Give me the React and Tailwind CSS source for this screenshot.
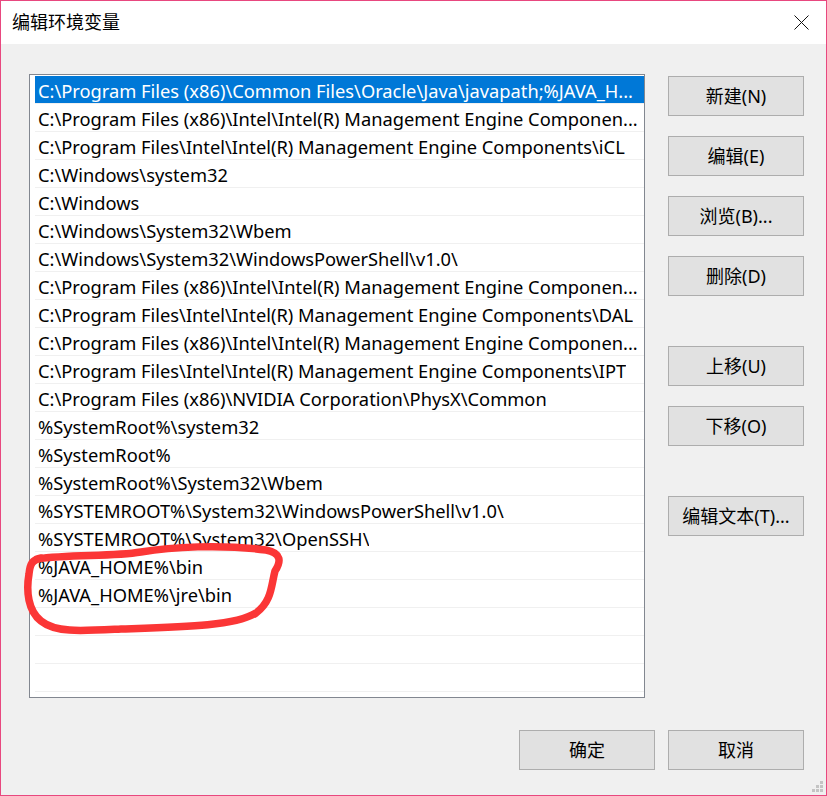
import React from 'react';

const rows = [
  'C:\\Program Files (x86)\\Common Files\\Oracle\\Java\\javapath;%JAVA_H...',
  'C:\\Program Files (x86)\\Intel\\Intel(R) Management Engine Componen...',
  'C:\\Program Files\\Intel\\Intel(R) Management Engine Components\\iCL',
  'C:\\Windows\\system32',
  'C:\\Windows',
  'C:\\Windows\\System32\\Wbem',
  'C:\\Windows\\System32\\WindowsPowerShell\\v1.0\\',
  'C:\\Program Files (x86)\\Intel\\Intel(R) Management Engine Componen...',
  'C:\\Program Files\\Intel\\Intel(R) Management Engine Components\\DAL',
  'C:\\Program Files (x86)\\Intel\\Intel(R) Management Engine Componen...',
  'C:\\Program Files\\Intel\\Intel(R) Management Engine Components\\IPT',
  'C:\\Program Files (x86)\\NVIDIA Corporation\\PhysX\\Common',
  '%SystemRoot%\\system32',
  '%SystemRoot%',
  '%SystemRoot%\\System32\\Wbem',
  '%SYSTEMROOT%\\System32\\WindowsPowerShell\\v1.0\\',
  '%SYSTEMROOT%\\System32\\OpenSSH\\',
  '%JAVA_HOME%\\bin',
  '%JAVA_HOME%\\jre\\bin',
  '',
  '',
  '',
  '',
];

function Btn({ children, className = '' }) {
  return (
    <button className={`w-[136px] h-[40px] bg-[#e1e1e1] border border-[#adadad] text-[18px] text-black flex items-center justify-center ${className}`}>
      {children}
    </button>
  );
}

export default function App() {
  return (
    <div
      className="relative w-[827px] h-[796px] border border-[#e8487f] flex flex-col bg-[#f0f0f0] overflow-hidden"
      style={{ fontFamily: '"Noto Sans", "Noto Sans CJK SC", sans-serif' }}
    >
      {/* Title bar */}
      <div className="h-[43px] bg-white flex items-center justify-between pl-[11px] pr-[17px] shrink-0">
        <span className="text-[18px] text-black">编辑环境变量</span>
        <svg width="15" height="15" viewBox="0 0 15 15">
          <path d="M0.5 0.5 L14.5 14.5 M14.5 0.5 L0.5 14.5" stroke="#111" strokeWidth="1" />
        </svg>
      </div>

      {/* Body */}
      <div className="flex-1 flex flex-col">
        <div className="flex pl-[28px] pt-[30px] gap-[23px]">
          {/* Path list */}
          <div className="w-[616px] h-[624px] border border-[#828790] bg-white pl-[5px] pt-px overflow-hidden">
            {rows.map((r, i) => (
              <div
                key={i}
                className={`h-[28px] border-b border-[#f0f0f0] pl-[3px] pr-[2px] pt-[2px] flex items-center text-[18.3px] whitespace-nowrap overflow-hidden ${
                  i === 0 ? 'bg-[#0078d7] text-white' : 'text-black'
                }`}
              >
                <span className="truncate">{r}</span>
              </div>
            ))}
          </div>

          {/* Side buttons */}
          <div className="flex flex-col pt-[2px]">
            <Btn>新建(N)</Btn>
            <Btn className="mt-[20px]">编辑(E)</Btn>
            <Btn className="mt-[20px]">浏览(B)...</Btn>
            <Btn className="mt-[20px]">删除(D)</Btn>
            <Btn className="mt-[50px]">上移(U)</Btn>
            <Btn className="mt-[20px]">下移(O)</Btn>
            <Btn className="mt-[50px]">编辑文本(T)...</Btn>
          </div>
        </div>

        <div className="flex justify-end gap-[13px] pr-[22px] mt-[32px]">
          <Btn>确定</Btn>
          <Btn>取消</Btn>
        </div>
      </div>

      {/* Resize grip */}
      <svg className="absolute right-[3px] bottom-[3px]" width="11" height="11" viewBox="0 0 11 11">
        <rect x="8" y="0" width="3" height="3" fill="#c4c4c4" />
        <rect x="4" y="4" width="3" height="3" fill="#c4c4c4" />
        <rect x="8" y="4" width="3" height="3" fill="#c4c4c4" />
        <rect x="0" y="8" width="3" height="3" fill="#c4c4c4" />
        <rect x="4" y="8" width="3" height="3" fill="#c4c4c4" />
        <rect x="8" y="8" width="3" height="3" fill="#c4c4c4" />
      </svg>

      {/* Red hand-drawn annotation */}
      <svg className="absolute left-0 top-0 pointer-events-none" width="827" height="796" viewBox="0 0 827 796">
        <path
          d="M36 558 C70 553 110 556 140 551 C170 546 220 543 265 549 C281 552 280 561 274 570 C270 585 271 600 255 612 C235 625 180 626 120 628 C80 630 55 632 40 620 C27 610 25 590 28 573 C29 563 31 559 40 557"
          fill="none"
          stroke="#fb3636"
          strokeWidth="7.5"
          strokeLinecap="round"
          strokeLinejoin="round"
        />
      </svg>
    </div>
  );
}
